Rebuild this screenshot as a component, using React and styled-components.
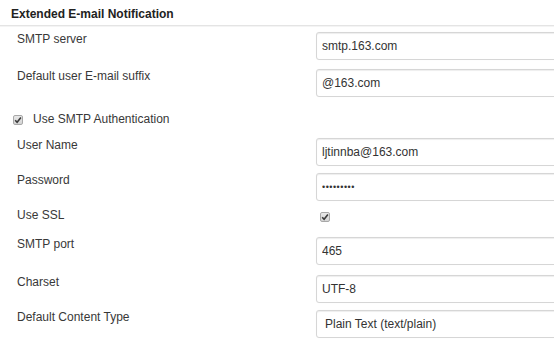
import React from "react";
import styled, { createGlobalStyle } from "styled-components";

const Global = createGlobalStyle`
  html, body {
    margin: 0;
    padding: 0;
    background: #fff;
    overflow: hidden;
  }
  body {
    font-family: "Liberation Sans", Arial, sans-serif;
    font-size: 12px;
    color: #333;
  }
  * { box-sizing: border-box; }
`;

const Page = styled.div`
  width: 554px;
  height: 343px;
  overflow: hidden;
`;

const Header = styled.div`
  height: 26px;
  padding: 7px 0 0 11px;
  font-weight: bold;
  font-size: 12px;
  line-height: 15px;
  color: #222;
  border-bottom: 1px solid #e4e4e4;
  box-shadow: 0 1px 0 #f4f4f4;
`;

const Row = styled.div`
  display: flex;
  align-items: flex-start;
  padding-top: ${(p) => p.$top}px;
`;

const Label = styled.div`
  width: 316px;
  flex: none;
  padding-left: 17px;
  line-height: 15px;
  color: #383838;
`;

const Field = styled.div`
  flex: none;
  width: 260px;
`;

const Input = styled.input`
  display: block;
  width: 100%;
  height: 28px;
  margin: 0;
  padding: 0 5px;
  border: 1px solid #d6d6d6;
  border-radius: 3px;
  box-shadow: inset 0 1px 1px rgba(0, 0, 0, 0.07), 0 0 1px rgba(0, 0, 0, 0.05);
  background: #fff;
  font-family: "Liberation Sans", Arial, sans-serif;
  font-size: 12px;
  color: #333;
  outline: none;
  &[type="password"] {
    font-size: 9px;
    letter-spacing: 0.5px;
  }
`;

const Select = styled.select`
  display: block;
  width: 100%;
  height: 28px;
  margin: 0;
  padding: 0 8px;
  border: 1px solid #d6d6d6;
  border-radius: 3px;
  box-shadow: inset 0 1px 1px rgba(0, 0, 0, 0.07), 0 0 1px rgba(0, 0, 0, 0.05);
  background: #fff;
  font-family: "Liberation Sans", Arial, sans-serif;
  font-size: 12px;
  color: #333;
  appearance: none;
  outline: none;
`;

const CheckRow = styled.label`
  display: flex;
  align-items: center;
  gap: 10px;
  padding-left: 13px;
  line-height: 15px;
  color: #383838;
`;

const Box = styled.span`
  display: inline-flex;
  align-items: center;
  justify-content: center;
  width: 10px;
  height: 10px;
  flex: none;
  border: 1px solid #a8a8a8;
  border-radius: 2px;
  background: linear-gradient(#e8e8e8, #d4d4d4);
`;

const Check = () => (
  <Box>
    <svg width="8" height="8" viewBox="0 0 8 8">
      <path d="M1.2 4.2 L3.1 6.2 L6.9 1.4" fill="none" stroke="#3a3a3a" strokeWidth="1.6" />
    </svg>
  </Box>
);

const SslField = styled.div`
  padding: 2px 0 0 4px;
`;

const fields = [
  { label: "User Name", value: "ljtinnba@163.com", top: 11 },
  { label: "Password", value: "123456789", top: 7, type: "password" },
];

export default function App() {
  return (
    <Page>
      <Global />
      <Header>Extended E-mail Notification</Header>
      <Row $top={6}>
        <Label>SMTP server</Label>
        <Field>
          <Input defaultValue="smtp.163.com" />
        </Field>
      </Row>
      <Row $top={9}>
        <Label>Default user E-mail suffix</Label>
        <Field>
          <Input defaultValue="@163.com" />
        </Field>
      </Row>
      <Row $top={15}>
        <CheckRow>
          <Check />
          Use SMTP Authentication
        </CheckRow>
      </Row>
      {fields.map((f) => (
        <Row key={f.label} $top={f.top}>
          <Label>{f.label}</Label>
          <Field>
            <Input type={f.type || "text"} defaultValue={f.value} />
          </Field>
        </Row>
      ))}
      <Row $top={7}>
        <Label>Use SSL</Label>
        <SslField>
          <Check />
        </SslField>
      </Row>
      <Row $top={13}>
        <Label>SMTP port</Label>
        <Field>
          <Input defaultValue="465" />
        </Field>
      </Row>
      <Row $top={10}>
        <Label>Charset</Label>
        <Field>
          <Input defaultValue="UTF-8" />
        </Field>
      </Row>
      <Row $top={7}>
        <Label>Default Content Type</Label>
        <Field>
          <Select defaultValue="text/plain">
            <option value="text/plain">Plain Text (text/plain)</option>
            <option value="text/html">HTML (text/html)</option>
          </Select>
        </Field>
      </Row>
    </Page>
  );
}
